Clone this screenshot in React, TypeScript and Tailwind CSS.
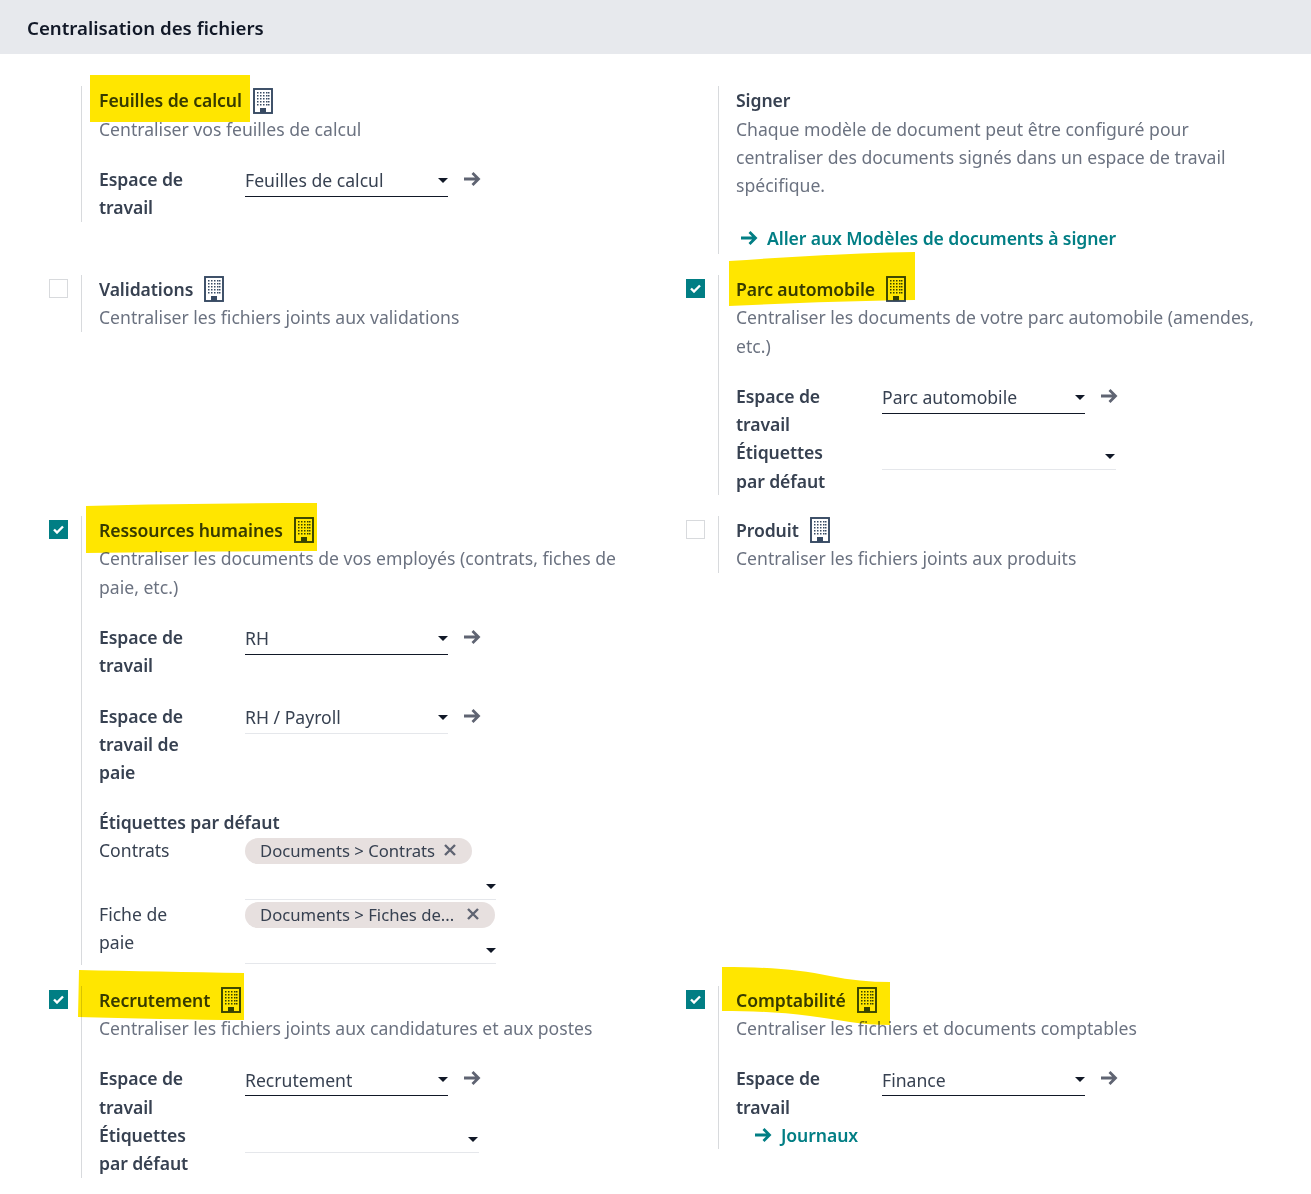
import React from 'react';

const BuildingIcon = () => (
  <svg width="20" height="26" viewBox="0 0 20 26" className="shrink-0 text-[#374a63]" fill="currentColor">
    <rect x="1" y="1" width="18" height="24" fill="none" stroke="currentColor" strokeWidth="1.9" />
    {[4, 7, 10, 13, 16].map((y) =>
      [4, 7, 10, 13, 15].map((x) => <rect key={`${x}-${y}`} x={x} y={y} width="1.5" height="1.5" />)
    )}
    <rect x="7" y="20" width="6" height="5" />
  </svg>
);

const ArrowIcon = ({ className = 'text-[#5f6472]' }: { className?: string }) => (
  <svg width="18" height="16" viewBox="0 0 18 16" className={`shrink-0 ${className}`} fill="none" stroke="currentColor" strokeWidth="2.8">
    <path d="M1 8h14M9.5 2l6 6-6 6" />
  </svg>
);

const Caret = () => (
  <svg width="10" height="5" viewBox="0 0 10 5" className="shrink-0 text-[#111827]" fill="currentColor">
    <path d="M0 0h10L5 5z" />
  </svg>
);

const Checkbox = ({ checked }: { checked: boolean }) =>
  checked ? (
    <div className="w-[19px] h-[19px] bg-[#017e84] flex items-center justify-center">
      <svg width="11" height="9" viewBox="0 0 11 9" fill="none" stroke="white" strokeWidth="2.4">
        <path d="M1 4.5l3 3 6-6" />
      </svg>
    </div>
  ) : (
    <div className="w-[19px] h-[19px] bg-white border border-[#d8dadd]" />
  );

const Select = ({ value, strong = true }: { value: string; strong?: boolean }) => (
  <div className="flex items-start">
    <div className={`w-[203px] h-[32px] flex items-center justify-between border-b ${strong ? 'border-[#111827]' : 'border-[#e5e7eb]'}`}>
      <span className="text-[#374151]">{value}</span>
      <Caret />
    </div>
    <div className="ml-[15px] mt-[6px]">
      <ArrowIcon />
    </div>
  </div>
);

const EmptySelect = () => (
  <div className="w-[234px] h-[32px] flex items-center justify-end pr-[1px] border-b border-[#e5e7eb] pt-[6px]">
    <Caret />
  </div>
);

const TagField = ({ tag, wide = false }: { tag: string; wide?: boolean }) => (
  <div className="w-[251px] h-[64px] border-b border-[#e5e7eb] pt-[2px]">
    <div className="flex w-fit items-center h-[26px] max-w-full pl-[15px] pr-[15px] rounded-full bg-[#e7e0df] text-[16.7px] text-[#374151]">
      <span className="whitespace-nowrap">{tag}</span>
      <span className={`${wide ? 'ml-[12px]' : 'ml-[8px]'} -mt-[3px] text-[#5f6472]`}>
        <svg width="14" height="14" viewBox="0 0 14 14" fill="none" stroke="currentColor" strokeWidth="2.4">
          <path d="M2 2l10 10M12 2L2 12" />
        </svg>
      </span>
    </div>
    <div className="flex justify-end mt-[20px]">
      <Caret />
    </div>
  </div>
);

const Field = ({ label, children, className = '' }: { label: React.ReactNode; children: React.ReactNode; className?: string }) => (
  <div className={`flex items-start ${className}`}>
    <div className="w-[146px] shrink-0 font-semibold tracking-[-0.005em] text-[#374151]">{label}</div>
    {children}
  </div>
);

interface SettingProps {
  title: string;
  icon?: boolean;
  checked?: boolean;
  description: React.ReactNode;
  children?: React.ReactNode;
}

const Setting = ({ title, icon = true, checked, description, children }: SettingProps) => (
  <div className="flex items-start">
    <div className="w-[81px] shrink-0 pl-[49px] pt-[4px]">
      {checked !== undefined && <Checkbox checked={checked} />}
    </div>
    <div className="border-l border-[#d8dadd] pl-[17px] flex-1 min-w-0">
      <div className="flex items-center h-[28.35px] gap-[11px]">
        <span className="font-semibold tracking-[-0.005em] text-[#374151]">{title}</span>
        {icon && <BuildingIcon />}
      </div>
      <div className="text-[#6b7280]">{description}</div>
      {children}
    </div>
  </div>
);

export default function App() {
  return (
    <div className="relative bg-white min-h-[1194px] text-[17.6px] leading-[28.35px] font-['Noto_Sans','Open_Sans',sans-serif]">
      <div className="h-[54px] bg-[#e7e9ed] flex items-center pl-[27px] pt-[2px] text-[18.7px] font-semibold text-[#111827]">
        Centralisation des fichiers
      </div>
      <div className="grid grid-cols-[637px_637px] items-start gap-y-[21px] pt-[32.4px]">
        <Setting title="Feuilles de calcul" description="Centraliser vos feuilles de calcul">
          <Field label={<>Espace de<br />travail</>} className="mt-[22px]">
            <Select value="Feuilles de calcul" />
          </Field>
        </Setting>
        <Setting
          title="Signer"
          icon={false}
          description="Chaque modèle de document peut être configuré pour centraliser des documents signés dans un espace de travail spécifique."
        >
          <a className="mt-[24px] mb-[2px] ml-[4px] flex items-center gap-[9px] font-semibold tracking-[-0.005em] text-[#017e84]">
            <ArrowIcon className="text-[#017e84]" />
            Aller aux Modèles de documents à signer
          </a>
        </Setting>

        <Setting title="Validations" checked={false} description="Centraliser les fichiers joints aux validations" />
        <Setting
          title="Parc automobile"
          checked
          description="Centraliser les documents de votre parc automobile (amendes, etc.)"
        >
          <Field label={<>Espace de<br />travail</>} className="mt-[21.5px]">
            <Select value="Parc automobile" />
          </Field>
          <Field label={<>Étiquettes<br />par défaut</>}>
            <EmptySelect />
          </Field>
        </Setting>

        <Setting
          title="Ressources humaines"
          checked
          description="Centraliser les documents de vos employés (contrats, fiches de paie, etc.)"
        >
          <Field label={<>Espace de<br />travail</>} className="mt-[22px]">
            <Select value="RH" />
          </Field>
          <Field label={<>Espace de<br />travail de<br />paie</>} className="mt-[22px]">
            <Select value="RH / Payroll" strong={false} />
          </Field>
          <div className="mt-[21px] font-semibold tracking-[-0.005em] text-[#374151]">Étiquettes par défaut</div>
          <div className="flex items-start">
            <div className="w-[146px] shrink-0 text-[#374151]">Contrats</div>
            <TagField tag="Documents > Contrats" />
          </div>
          <div className="flex items-start mb-[0.5px]">
            <div className="w-[146px] shrink-0 text-[#374151]">Fiche de<br />paie</div>
            <TagField tag="Documents > Fiches de..." wide />
          </div>
        </Setting>
        <Setting title="Produit" checked={false} description="Centraliser les fichiers joints aux produits" />

        <Setting
          title="Recrutement"
          checked
          description="Centraliser les fichiers joints aux candidatures et aux postes"
        >
          <Field label={<>Espace de<br />travail</>} className="mt-[22px]">
            <Select value="Recrutement" />
          </Field>
          <Field label={<>Étiquettes<br />par défaut</>}>
            <EmptySelect />
          </Field>
        </Setting>
        <Setting
          title="Comptabilité"
          checked
          description="Centraliser les fichiers et documents comptables"
        >
          <Field label={<>Espace de<br />travail</>} className="mt-[22px]">
            <Select value="Finance" />
          </Field>
          <a className="ml-[18px] flex items-center gap-[9px] font-semibold tracking-[-0.005em] text-[#017e84]">
            <ArrowIcon className="text-[#017e84]" />
            Journaux
          </a>
        </Setting>
      </div>

      {/* marker strokes painted over the screenshot */}
      <svg className="absolute inset-0 mix-blend-multiply pointer-events-none" width="1311" height="1194" fill="#ffe600">
        <path d="M90 75H250V122H90z" />
        <path d="M729 261C790 257 850 253 915 252V300C850 301 790 303 729 306z" />
        <path d="M86 506C160 504 240 503 317 503V551C240 551 160 552 86 553z" />
        <path d="M79 970C130 971 190 972 244 973V1020C190 1020 130 1018 78 1017z" />
        <path d="M722 967C770 967 800 970 830 976C850 980 870 982 890 982V1025C860 1025 840 1020 810 1016C780 1012 750 1011 722 1011z" />
      </svg>
    </div>
  );
}
